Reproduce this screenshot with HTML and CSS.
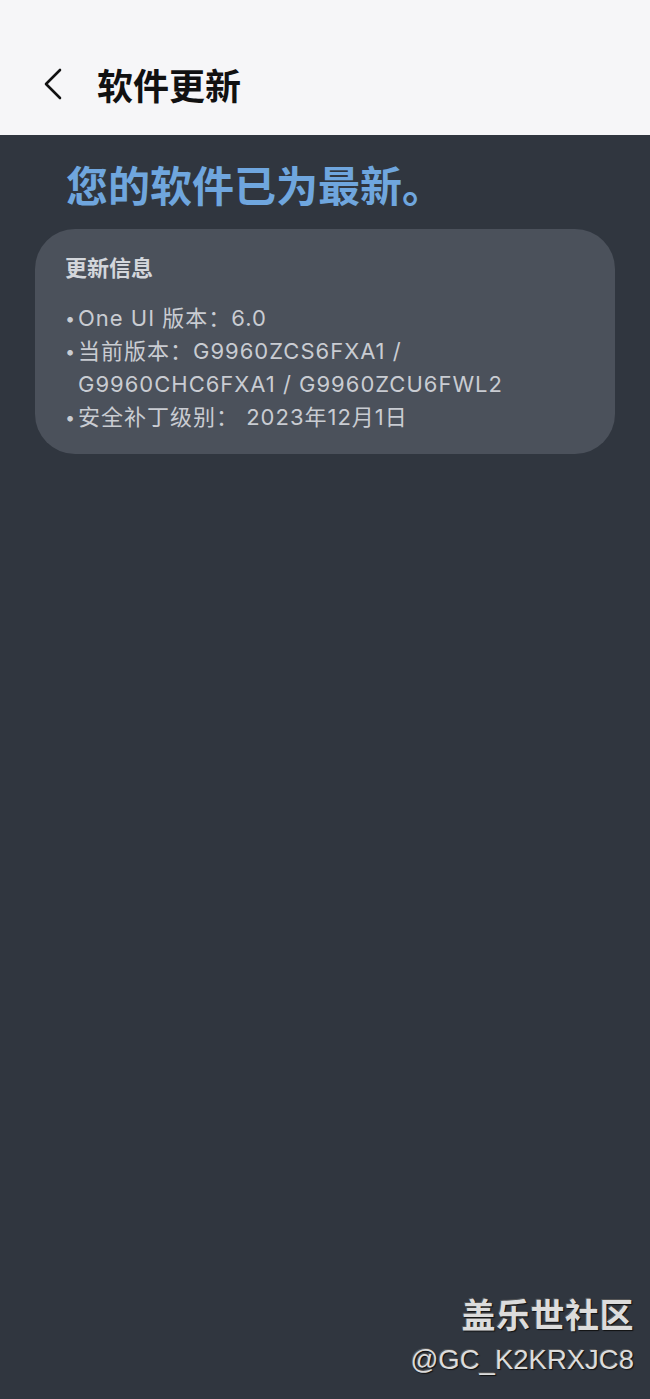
FILE: index.html
```html
<!DOCTYPE html>
<html lang="zh">
<head>
<meta charset="utf-8">
<link rel="stylesheet" href="styles.css">
</head>
<body>
<div class="page">
  <header class="appbar">
    <span class="back">
      <svg width="20" height="32" viewBox="0 0 20 32"><path d="M17 2 L3 16 L17 30" fill="none" stroke="#111" stroke-width="2.6" stroke-linecap="round" stroke-linejoin="round"/></svg>
    </span>
    <h1 class="title">软件更新</h1>
  </header>
  <main class="content">
    <h2 class="status">您的软件已为最新。</h2>
    <section class="card">
      <h3 class="card-title">更新信息</h3>
      <ul class="info">
        <li><span class="dot">•</span><span>One UI 版本：6.0</span></li>
        <li><span class="dot">•</span><span>当前版本：G9960ZCS6FXA1 /<br>G9960CHC6FXA1 / G9960ZCU6FWL2</span></li>
        <li><span class="dot">•</span><span>安全补丁级别：&nbsp;2023年12月1日</span></li>
      </ul>
    </section>
  </main>
  <div class="watermark">
    <div class="wm-brand">盖乐世社区</div>
    <div class="wm-user">@GC_K2KRXJC8</div>
  </div>
</div>
</body>
</html>
```

FILE: styles.css
```css
* { box-sizing: border-box; }
html, body { margin: 0; padding: 0; }
body {
  width: 650px;
  height: 1399px;
  overflow: hidden;
  background: #30363f;
  font-family: "Noto Sans CJK SC", "Noto Sans", sans-serif;
}
.page {
  position: relative;
  height: 1399px;
  display: flex;
  flex-direction: column;
}
.appbar {
  height: 135px;
  background: #f6f6f8;
  display: flex;
  align-items: center;
  padding: 33px 0 0 43px;
}
.back { display: flex; width: 20px; height: 32px; margin-right: 34px; }
.title {
  margin: 0;
  font-size: 36px;
  font-weight: 700;
  color: #111;
  line-height: 50px;
}
.content {
  padding: 0 35px 0 35px;
  flex: 1;
}
.status {
  margin: 0;
  padding: 17px 0 0 31px;
  height: 94px;
  font-size: 42px;
  font-weight: 700;
  color: #6fa6de;
  line-height: 64px;
}
.card {
  background: #4b515b;
  border-radius: 40px;
  height: 225px;
  padding: 21px 30px 0 30px;
}
.card-title {
  margin: 0 0 20px 0;
  font-size: 22px;
  font-weight: 700;
  color: #d3d6db;
  line-height: 32px;
}
.info {
  list-style: none;
  margin: 0;
  padding: 0;
  color: #c9ccd2;
  font-family: "Inter", "Noto Sans CJK SC", sans-serif;
  font-size: 22px;
  line-height: 33px;
  letter-spacing: 1px;
}
.info li { display: flex; }
.dot { width: 13px; flex: none; font-size: 18px; letter-spacing: 0; }
.watermark {
  position: absolute;
  right: 16px;
  top: 1290px;
  text-align: right;
  color: #dcdcdc;
  text-shadow: 1px 1px 1px #111, -1px -1px 0 #555;
}
.wm-brand {
  font-size: 34px;
  font-weight: 700;
  line-height: 48px;
  letter-spacing: 0.5px;
}
.wm-user {
  font-family: "Liberation Sans", "Noto Sans", sans-serif;
  font-size: 27.5px;
  line-height: 44px;
}
```
